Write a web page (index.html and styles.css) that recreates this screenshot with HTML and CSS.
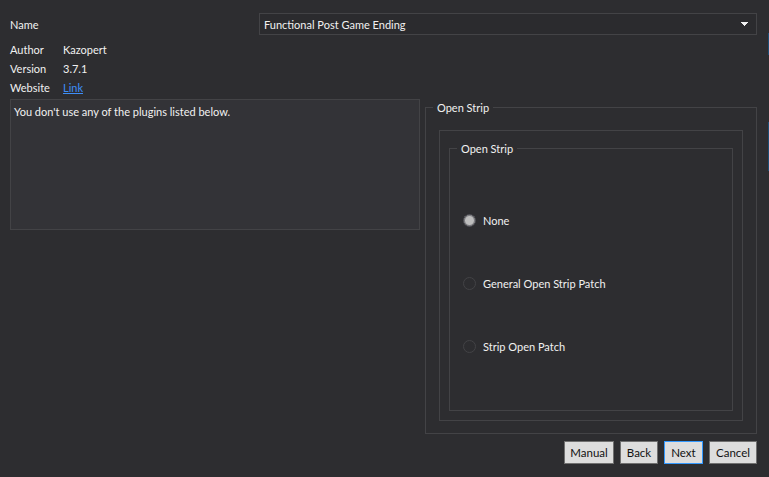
FILE: index.html
```html
<!DOCTYPE html>
<html>
<head>
<meta charset="utf-8">
<link rel="stylesheet" href="styles.css">
</head>
<body>
<div class="page">
  <div class="name-row">
    <span class="label">Name</span>
    <div class="combo">
      <span class="combo-text">Functional Post Game Ending</span>
      <svg class="combo-arrow" width="7" height="4" viewBox="0 0 7 4"><path d="M0 0H7V1H6V2H5V3H4V4H3V3H2V2H1V1H0Z" fill="#f1f1f1"/></svg>
    </div>
  </div>
  <div class="info">
    <span class="key">Author</span><span class="val">Kazopert</span>
    <span class="key">Version</span><span class="val">3.7.1</span>
    <span class="key">Website</span><span class="val"><a class="link" href="#">Link</a></span>
  </div>
  <div class="main">
    <div class="textbox">You don't use any of the plugins listed below.</div>
    <div class="right">
      <div class="group outer">
        <span class="legend">Open Strip</span>
        <div class="panel">
          <div class="group inner">
            <span class="legend">Open Strip</span>
            <div class="options">
              <label class="option"><span class="radio checked"></span>None</label>
              <label class="option"><span class="radio"></span>General Open Strip Patch</label>
              <label class="option"><span class="radio"></span>Strip Open Patch</label>
            </div>
          </div>
        </div>
      </div>
      <div class="buttons">
        <button class="btn w-manual">Manual</button>
        <button class="btn w-back">Back</button>
        <button class="btn w-next focus">Next</button>
        <button class="btn w-cancel">Cancel</button>
      </div>
    </div>
  </div>
  <div class="edge edge-a"></div>
  <div class="edge edge-b"></div>
</div>
</body>
</html>
```
FILE: styles.css
```css
html, body {
  margin: 0;
  padding: 0;
  background: #2d2d30;
}
body {
  width: 769px;
  height: 477px;
  overflow: hidden;
  font-family: Lato, "Noto Sans", sans-serif;
  font-size: 11px;
  color: #f1f1f1;
}
.page {
  position: relative;
  padding: 13px 12px 0 10px;
  height: 477px;
  box-sizing: border-box;
}
.name-row {
  display: flex;
  justify-content: space-between;
  align-items: center;
  height: 22px;
}
.combo {
  width: 498px;
  height: 22px;
  box-sizing: border-box;
  border: 1px solid #434346;
  background: #2b2b2e;
  display: flex;
  align-items: center;
  justify-content: space-between;
  padding: 0 8px 0 4px;
}
.combo-arrow { display: block; }
.info {
  margin-top: 5px;
  display: grid;
  grid-template-columns: 53px auto;
  grid-auto-rows: 19px;
  align-items: center;
}
.link {
  color: #3e8ef7;
  text-decoration: underline;
}
.main {
  margin-top: 2px;
  display: flex;
  align-items: flex-start;
}
.textbox {
  width: 410px;
  height: 131px;
  box-sizing: border-box;
  border: 1px solid #434346;
  background: #333337;
  padding: 3px 3px;
  line-height: 17px;
}
.right {
  margin-left: 5px;
  margin-top: 8px;
  width: 332px;
}
.group {
  position: relative;
  border: 1px solid #434346;
  box-sizing: border-box;
}
.legend {
  position: absolute;
  top: -9px;
  left: 7px;
  padding: 0 4px;
  background: #2d2d30;
  line-height: 17px;
}
.outer {
  height: 327px;
  padding: 22px 13px 12px 13px;
}
.panel {
  height: 100%;
  box-sizing: border-box;
  border: 1px solid #434346;
  padding: 17px 9px 9px 9px;
}
.inner {
  height: 100%;
}
.options {
  padding-top: 40px;
  display: flex;
  flex-direction: column;
  align-items: flex-start;
}
.option {
  height: 63px;
  display: flex;
  align-items: center;
  padding-left: 13px;
}
.radio {
  width: 13px;
  height: 13px;
  box-sizing: border-box;
  border-radius: 50%;
  border: 1px solid #434346;
  margin-right: 7px;
}
.radio.checked {
  border: 1px solid #47474d;
  background: #bdbdbd;
  box-shadow: inset 0 0 0 1px #7a7a7e;
}
.buttons {
  margin-top: 7px;
  display: flex;
  justify-content: flex-end;
  gap: 6px;
}
.btn {
  height: 23px;
  box-sizing: border-box;
  border: 1px solid #707070;
  background: #dddddd;
  color: #111;
  font-family: inherit;
  font-size: 11.5px;
  padding: 0;
}
.btn.focus { border-color: #3399ff; }
.w-manual { width: 50px; }
.w-back { width: 38px; }
.w-next { width: 39px; }
.w-cancel { width: 48px; }
.edge {
  position: absolute;
  right: 0;
  width: 1px;
  background: #1d4e75;
}
.edge-a { top: 33px; height: 22px; }
.edge-b { top: 122px; height: 49px; }
```
